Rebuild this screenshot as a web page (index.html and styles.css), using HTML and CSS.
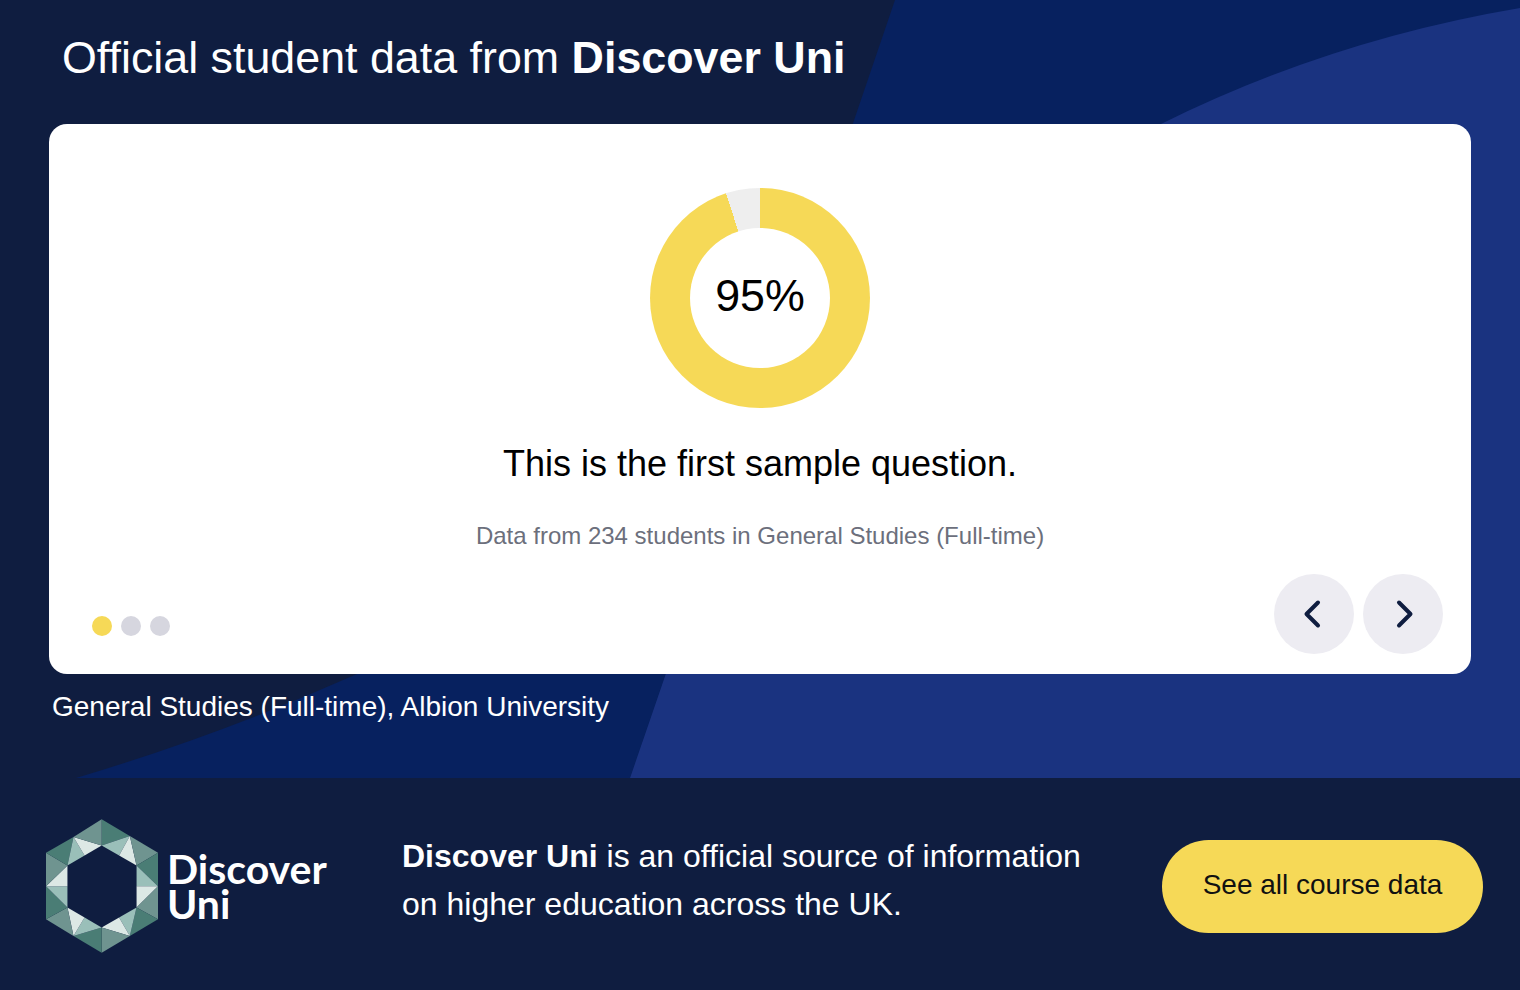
FILE: index.html
```html
<!DOCTYPE html>
<html lang="en">
<head>
    <meta charset="UTF-8">
    <meta name="viewport" content="width=device-width, initial-scale=1.0">
    <title>Discover Uni</title>
    <link rel="stylesheet" href="styles.css">
</head>
<body>

    <section class="hero">
        <svg class="hero-bg" viewBox="0 0 1520 778" aria-hidden="true">
            <path class="bg-mid" d="M895 0 L630 778 L1520 778 L1520 0 Z"/>
            <path class="bg-mid" d="M76 778 Q220 735 357 674 L760 400 L630 778 Z"/>
            <path class="bg-light" d="M760 400 L1161 124 Q1330 40 1520 8 L1520 778 L630 778 Z"/>
        </svg>

        <h1 class="hero-title">Official student data from <b>Discover Uni</b></h1>

        <div class="card">
            <div class="donut">
                <div class="donut-hole">95%</div>
            </div>
            <p class="question">This is the first sample question.</p>
            <p class="source">Data from 234 students in General Studies (Full-time)</p>

            <div class="card-bottom">
                <div class="dots">
                    <span class="dot dot-active"></span>
                    <span class="dot"></span>
                    <span class="dot"></span>
                </div>
                <div class="arrows">
                    <button class="arrow" aria-label="Previous">
                        <svg viewBox="0 0 24 32" class="chevron"><path d="M16 4.5 L4.5 16 L16 27.5"/></svg>
                    </button>
                    <button class="arrow" aria-label="Next">
                        <svg viewBox="0 0 24 32" class="chevron"><path d="M8 4.5 L19.5 16 L8 27.5"/></svg>
                    </button>
                </div>
            </div>
        </div>

        <p class="caption">General Studies (Full-time), Albion University</p>
    </section>

    <footer class="footer">
        <div class="logo">
            <svg class="logo-mark" viewBox="18 12 334 398" aria-hidden="true">
                <polygon class="gem-dark" points="184,12 268,62 184,90"/>
                <polygon class="gem-mid" points="268,62 184,90 236,120"/>
                <polygon class="gem-pale" points="268,62 236,120 288,150"/>
                <polygon class="gem-grey" points="268,62 352,112 288,150"/>
                <polygon class="gem-dark" points="352,112 352,212 288,150"/>
                <polygon class="gem-mid" points="288,150 352,212 288,212"/>
                <polygon class="gem-pale" points="352,212 288,212 288,275"/>
                <polygon class="gem-grey" points="352,212 352,310 288,275"/>
                <polygon class="gem-dark" points="352,310 268,360 288,275"/>
                <polygon class="gem-mid" points="288,275 268,360 236,305"/>
                <polygon class="gem-pale" points="268,360 236,305 184,335"/>
                <polygon class="gem-grey" points="268,360 184,410 184,335"/>
                <polygon class="gem-dark" points="184,410 100,360 184,335"/>
                <polygon class="gem-mid" points="184,335 100,360 133,305"/>
                <polygon class="gem-pale" points="100,360 133,305 82,275"/>
                <polygon class="gem-grey" points="100,360 18,310 82,275"/>
                <polygon class="gem-dark" points="18,310 18,212 82,275"/>
                <polygon class="gem-mid" points="82,275 18,212 82,212"/>
                <polygon class="gem-pale" points="18,212 82,212 82,150"/>
                <polygon class="gem-grey" points="18,212 18,112 82,150"/>
                <polygon class="gem-dark" points="18,112 100,65 82,150"/>
                <polygon class="gem-mid" points="82,150 100,65 133,120"/>
                <polygon class="gem-pale" points="100,65 133,120 184,90"/>
                <polygon class="gem-grey" points="100,65 184,12 184,90"/>
            </svg>
            <div class="logo-text">Discover<br>Uni</div>
        </div>
        <p class="footer-text"><b>Discover Uni</b> is an official source of information<br>on higher education across the UK.</p>
        <a class="cta" href="#">See all course data</a>
    </footer>

</body>
</html>
```

FILE: styles.css
```css
* {
    box-sizing: border-box;
}

body {
    margin: 0;
    font-family: "Liberation Sans", Arial, sans-serif;
    background-color: #0f1d40;
    color: #fff;
}

.hero {
    position: relative;
    height: 778px;
    padding: 0 49px;
}

.hero-bg {
    position: absolute;
    top: 0;
    left: 0;
    width: 1520px;
    height: 778px;
}

.bg-mid {
    fill: #07215f;
}

.bg-light {
    fill: #1a3380;
}

.hero-title {
    position: relative;
    height: 124px;
    margin: 0;
    padding-left: 13px;
    font-size: 44.8px;
    font-weight: 400;
    line-height: 114px;
}

.card {
    position: relative;
    height: 550px;
    padding: 64px 28px 20px;
    display: flex;
    flex-direction: column;
    align-items: center;
    background-color: #fff;
    border-radius: 18px;
    color: #000;
}

.donut {
    width: 220px;
    height: 220px;
    flex-shrink: 0;
    display: flex;
    align-items: center;
    justify-content: center;
    border-radius: 50%;
    background: conic-gradient(#f6d957 0 95%, #eeeeee 95% 100%);
}

.donut-hole {
    width: 140px;
    height: 140px;
    padding-bottom: 6px;
    display: flex;
    align-items: center;
    justify-content: center;
    border-radius: 50%;
    background-color: #fff;
    font-size: 44.8px;
}

.question {
    margin: 33px 0 0;
    font-size: 36px;
    line-height: 46px;
}

.source {
    margin: 34px 0 0;
    font-size: 24px;
    line-height: 30px;
    color: #6c6f7c;
}

.card-bottom {
    margin-top: auto;
    width: 100%;
    display: flex;
    justify-content: space-between;
    align-items: flex-end;
}

.dots {
    display: flex;
    gap: 9px;
    margin: 0 0 18px 15px;
}

.dot {
    width: 20px;
    height: 20px;
    border-radius: 50%;
    background-color: #d6d6df;
}

.dot-active {
    background-color: #f6d957;
}

.arrows {
    display: flex;
    gap: 9px;
}

.arrow {
    width: 80px;
    height: 80px;
    padding: 0;
    display: flex;
    align-items: center;
    justify-content: center;
    border: none;
    border-radius: 50%;
    background-color: #edecf2;
    cursor: pointer;
}

.chevron {
    width: 24px;
    height: 32px;
    fill: none;
    stroke: #0f1d40;
    stroke-width: 4;
    stroke-linecap: round;
    stroke-linejoin: round;
}

.caption {
    position: relative;
    margin: 14px 0 0 3px;
    font-size: 28px;
    line-height: 37px;
}

.footer {
    height: 212px;
    padding: 0 37px 0 46px;
    display: flex;
    align-items: center;
    background-color: #0f1d40;
}

.logo {
    width: 356px;
    display: flex;
    align-items: center;
    flex-shrink: 0;
}

.logo-mark {
    width: 112px;
    height: 134px;
    margin-top: 3px;
    flex-shrink: 0;
}

.gem-dark {
    fill: #4a7d75;
}

.gem-grey {
    fill: #6f9490;
}

.gem-mid {
    fill: #9abfb9;
}

.gem-pale {
    fill: #dce8e5;
}

.logo-text {
    margin: 4px 0 0 9px;
    font-family: Lato, sans-serif;
    font-size: 41px;
    font-weight: 700;
    line-height: 35px;
}

.footer-text {
    margin: 0 0 8px;
    font-size: 32px;
    line-height: 48px;
}

.cta {
    margin: 5px 0 0 auto;
    width: 321px;
    height: 93px;
    padding-bottom: 4px;
    display: flex;
    align-items: center;
    justify-content: center;
    border-radius: 47px;
    background-color: #f6d957;
    color: #111;
    font-size: 28px;
    text-decoration: none;
}
```
